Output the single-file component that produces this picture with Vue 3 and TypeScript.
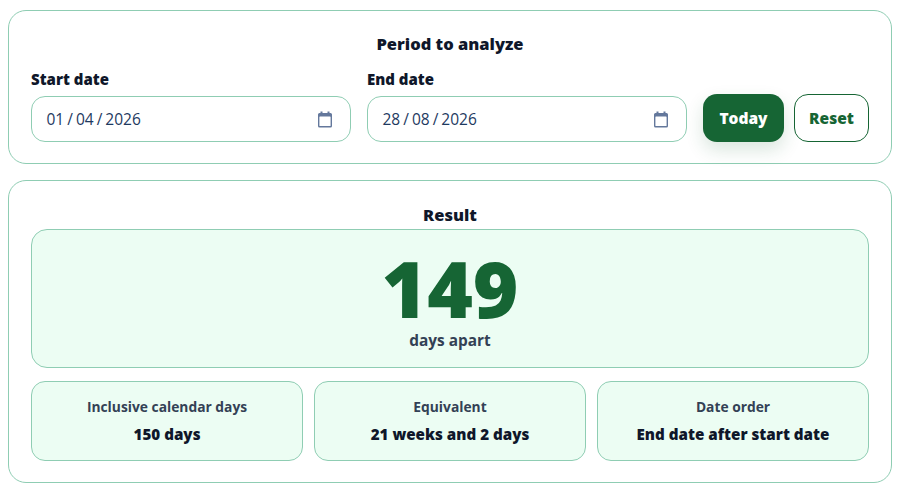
<script setup lang="ts">
interface Stat {
  label: string
  value: string
}
const fields = [
  { label: 'Start date', value: ['01', '04', '2026'] },
  { label: 'End date', value: ['28', '08', '2026'] },
]
const stats: Stat[] = [
  { label: 'Inclusive calendar days', value: '150 days' },
  { label: 'Equivalent', value: '21 weeks and 2 days' },
  { label: 'Date order', value: 'End date after start date' },
]
</script>

<template>
  <main class="page">
    <section class="card period">
      <h2 class="title">Period to analyze</h2>
      <div class="controls">
        <div v-for="f in fields" :key="f.label" class="field">
          <div class="label">{{ f.label }}</div>
          <div class="input">
            <span class="date">
              <span>{{ f.value[0] }}</span><span class="sep">/</span><span>{{ f.value[1] }}</span><span class="sep">/</span><span>{{ f.value[2] }}</span>
            </span>
            <svg class="cal" width="16" height="17" viewBox="0 0 16 17" aria-hidden="true">
              <path d="M3.5 0.5h2V2h5V0.5h2V2h1A1.5 1.5 0 0 1 15 3.5v11.5a1.5 1.5 0 0 1-1.5 1.5h-11A1.5 1.5 0 0 1 1 15V3.5A1.5 1.5 0 0 1 2.5 2h1z" fill="#64789c"/>
              <rect x="2.4" y="5.4" width="11.2" height="9.7" rx="0.6" fill="#fff"/>
            </svg>
          </div>
        </div>
        <div class="actions">
          <button class="btn primary">Today</button>
          <button class="btn ghost">Reset</button>
        </div>
      </div>
    </section>

    <section class="card result">
      <h2 class="title result-title">Result</h2>
      <div class="hero">
        <div class="number">149</div>
        <div class="unit">days apart</div>
      </div>
      <div class="stats">
        <div v-for="s in stats" :key="s.label" class="stat">
          <div class="stat-label">{{ s.label }}</div>
          <div class="stat-value">{{ s.value }}</div>
        </div>
      </div>
    </section>
  </main>
</template>

<style>
html, body { margin: 0; background: #fff; }
</style>

<style scoped>
.page {
  box-sizing: border-box;
  width: 897px;
  height: 490px;
  padding: 10px 5px 7px 8px;
  display: flex;
  flex-direction: column;
  gap: 16px;
  font-family: "Open Sans", "Noto Sans", sans-serif;
  color: #0f172a;
}
.card {
  box-sizing: border-box;
  border: 1px solid #8fcdb3;
  border-radius: 18px;
  background: #fff;
  padding: 0 22px;
}
.period { height: 154px; }
.result { height: 303px; }
.title {
  margin: 0;
  font-size: 16.5px;
  line-height: 22px;
  font-weight: 800;
  text-align: center;
}
.period .title { padding-top: 22px; }
.controls {
  display: flex;
  align-items: flex-end;
  gap: 16px;
  margin-top: 14px;
}
.field { width: 320px; }
.label {
  font-size: 15px;
  line-height: 20px;
  font-weight: 800;
  margin-bottom: 7px;
}
.input {
  box-sizing: border-box;
  height: 46px;
  border: 1px solid #8fcdb3;
  border-radius: 14px;
  padding: 0 17px 0 14.5px;
  display: flex;
  align-items: center;
  justify-content: space-between;
}
.date { font-size: 15.5px; color: #1e3a5f; }
.sep { margin: 0 3px; }
.cal { flex: none; }
.actions { display: flex; gap: 10px; }
.btn {
  box-sizing: border-box;
  height: 48px;
  border-radius: 14px;
  font-family: inherit;
  font-size: 15.5px;
  font-weight: 800;
  padding: 0;
}
.primary {
  width: 81px;
  border: none;
  background: #166534;
  color: #fff;
  box-shadow: 0 8px 18px rgba(22, 101, 52, 0.16);
}
.ghost {
  width: 75px;
  border: 1px solid #166534;
  background: #fff;
  color: #166534;
}
.result-title { padding-top: 22px; line-height: 24px; height: 48px; box-sizing: border-box; }
.hero {
  box-sizing: border-box;
  height: 139px;
  background: #ecfdf3;
  border: 1px solid #8fcdb3;
  border-radius: 16px;
  text-align: center;
}
.number {
  font-size: 78px;
  line-height: 80px;
  font-weight: 800;
  color: #166534;
  margin-top: 18px;
}
.unit {
  font-size: 15.4px;
  line-height: 20px;
  font-weight: 700;
  color: #334155;
  margin-top: 3px;
}
.stats {
  display: grid;
  grid-template-columns: repeat(3, 1fr);
  gap: 11px;
  margin-top: 13px;
}
.stat {
  box-sizing: border-box;
  height: 80px;
  background: #ecfdf3;
  border: 1px solid #8fcdb3;
  border-radius: 14px;
  text-align: center;
  padding-top: 16px;
}
.stat-label {
  font-size: 13.8px;
  line-height: 18px;
  font-weight: 700;
  color: #334155;
}
.stat-value {
  font-size: 15.2px;
  line-height: 20px;
  font-weight: 800;
  margin-top: 8px;
}
</style>
